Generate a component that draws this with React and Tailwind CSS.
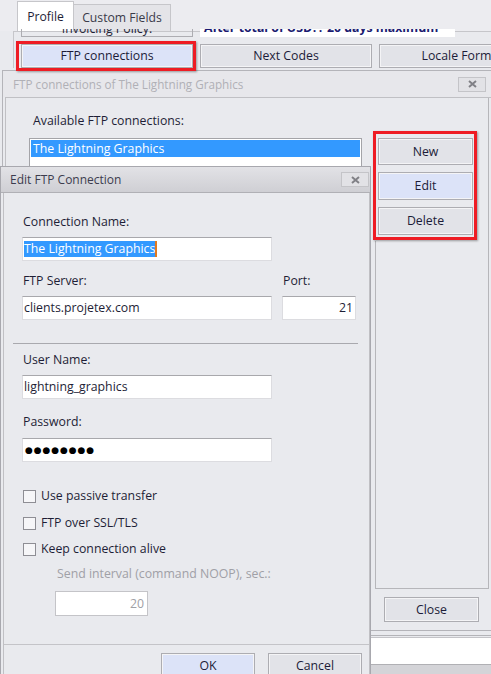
import React from "react";

const btn =
  "flex items-center justify-center border border-[#adadb2] shadow-[inset_0_0_0_1px_#f4f4f6] text-[#1c1c38]";

function CloseX() {
  return (
    <div className="flex items-center justify-center w-[28px] h-[15px] border border-[#c4c4c8] bg-[#e2e2e6]">
      <svg width="9" height="8" viewBox="0 0 9 8">
        <path d="M1 1 L8 7 M8 1 L1 7" stroke="#808086" strokeWidth="2" />
      </svg>
    </div>
  );
}

function Field({ className = "", children }) {
  return (
    <div
      className={
        "h-[24px] bg-white border border-[#dcdce0] border-t-[#a8a8ac] flex items-center px-[1px] " +
        className
      }
    >
      {children}
    </div>
  );
}

function Check({ label }) {
  return (
    <div className="flex items-center h-[16px]">
      <div className="w-[13px] h-[13px] border border-[#8e8e94] bg-[#f6f6f8] ml-[21px]" />
      <span className="ml-[5px]">{label}</span>
    </div>
  );
}

export default function App() {
  return (
    <div className="relative w-[491px] h-[674px] overflow-hidden bg-[#e9eaee] text-[12.3px] leading-[16px] text-[#1e1e36] font-['Open_Sans',sans-serif]">
      {/* main window (behind) */}
      <div className="flex flex-col h-full">
        <div className="flex items-end h-[31px] pl-[17px] bg-[#ececf0]">
          <div className="w-[57px] h-[30px] bg-white border border-[#c6c6ca] border-b-0 flex items-center justify-center text-[12.2px]">
            Profile
          </div>
          <div className="w-[97px] h-[27px] bg-[#e4e4e8] border border-[#c6c6ca] border-b-0 border-l-0 flex items-center justify-center text-[12.2px] text-[#3a3a48]">
            Custom Fields
          </div>
        </div>
        <div className="ml-[13px] border-l border-t border-[#c6c6ca] flex flex-col pl-[7px]">
          <div className="h-[8px] -mt-[3px] overflow-hidden flex gap-[7px]">
            <div className="w-[172px] h-[8px] shrink-0 border-x border-b border-[#adadb2] flex justify-center">
              <span className="block -mt-[8px]">Invoicing Policy:</span>
            </div>
            <div className="w-[255px] h-[8px] shrink-0 flex flex-col bg-white">
              <span className="block -mt-[9px] pl-[4px] font-bold text-[#1a1a70] whitespace-nowrap">
                After total of USD?? 20 days maximum
              </span>
            </div>
          </div>
          <div className="mt-[7px] flex gap-[7px]">
            <div className={btn + " w-[172px] h-[24px] bg-[#dce3f8] shrink-0"}>FTP connections</div>
            <div className={btn + " w-[172px] h-[24px] bg-[#e2e3e8] shrink-0"}>Next Codes</div>
            <div className={btn + " w-[172px] h-[24px] bg-[#e2e3e8] shrink-0"}>Locale Formats</div>
          </div>
        </div>
        <div className="flex-1" />
        <div className="border-t border-[#b4b4b8] mt-[3px] h-[1px]" />
        <div className="h-[27px] bg-white border-t border-[#c4c4c8] mt-[1px]" />
        <div className="h-[10px] bg-[#d4d4d8] border-t border-[#b0b0b4]" />
      </div>

      {/* FTP connections window */}
      <div className="absolute left-[2px] top-[70px] w-[490px] h-[561px] bg-[#e9eaee] border border-[#b4b4b9] flex flex-col">
        <div className="h-[26px] flex items-center justify-between pl-[10px] pr-[5px] bg-[#e7e7eb]">
          <span className="text-[#b0b0b6] text-[11.7px]">FTP connections of The Lightning Graphics</span>
          <CloseX />
        </div>
        <div className="flex-1 flex flex-col ml-[2px] border-t border-l border-[#c0c0c4]">
          <div className="h-[491px] flex">
            <div className="w-[369px] flex flex-col pl-[27px] pt-[15px]">
              <div>Available FTP connections:</div>
              <div className="mt-[9px] -ml-[4px] w-[333px] h-[120px] bg-white border border-[#a4a4a8] p-[1px]">
                <div className="h-[17px] bg-[#3399ff] text-white pl-[2px] flex items-center">The Lightning Graphics</div>
              </div>
            </div>
            <div className="w-[114px] flex flex-col">
              <div className="h-[143px] border-r border-[#b6b6ba] flex flex-col pl-[3px] pt-[40px] gap-[7px]">
                <div className={btn + " w-[95px] h-[27px] bg-[#e2e3e8]"}>New</div>
                <div className={btn + " w-[95px] h-[28px] bg-[#dce3f8]"}>Edit</div>
                <div className={btn + " w-[95px] h-[28px] bg-[#e2e3e8]"}>Delete</div>
              </div>
              <div className="flex-1 border-l border-r border-b border-[#b6b6ba]" />
            </div>
          </div>
          <div className="flex pl-[378px] pt-[8px]">
            <div className={btn + " w-[95px] h-[25px] bg-[#e2e3e8]"}>Close</div>
          </div>
        </div>
      </div>

      {/* Edit FTP Connection dialog */}
      <div className="absolute left-0 top-[166px] w-[371px] h-[520px] border border-[#a8a8ae] bg-[#e9eaee] flex flex-col">
        <div className="h-[26px] flex items-center justify-between pl-[9px] pr-[1px] bg-gradient-to-b from-[#e2e2e6] to-[#cfcfd4] border-b border-[#b0b0b5]">
          <span className="text-[#3c3c4e] text-[12px]">Edit FTP Connection</span>
          <CloseX />
        </div>
        <div className="flex-1 ml-[2px] border-l border-r border-[#c0c0c4] flex flex-col">
          <div className="pl-[19px] pt-[21px]">Connection Name:</div>
          <Field className="mt-[7px] ml-[18px] w-[250px]">
            <span className="bg-[#3399ff] text-white h-[16px] flex items-center border-r-2 border-[#e07a20]">
              The Lightning Graphics
            </span>
          </Field>
          <div className="flex mt-[12px]">
            <div className="flex flex-col">
              <div className="pl-[19px]">FTP Server:</div>
              <Field className="mt-[7px] ml-[18px] w-[250px]">clients.projetex.com</Field>
            </div>
            <div className="flex flex-col ml-[10px]">
              <div className="pl-[1px]">Port:</div>
              <Field className="mt-[7px] w-[74px] justify-end pr-[2px]">21</Field>
            </div>
          </div>
          <div className="mt-[23px] ml-[9px] w-[345px] h-[1px] bg-[#a9a9ae]" />
          <div className="pl-[19px] mt-[8px]">User Name:</div>
          <Field className="mt-[7px] ml-[18px] w-[250px]">lightning_graphics</Field>
          <div className="pl-[19px] mt-[15px]">Password:</div>
          <Field className="mt-[8px] ml-[18px] w-[250px]">
            <span className="font-['DejaVu_Sans',sans-serif] text-[9px] tracking-[0.9px] text-black pl-[1px]">●●●●●●●●</span>
          </Field>
          <div className="mt-[26px] flex flex-col gap-[11px] -ml-[2px]">
            <Check label="Use passive transfer" />
            <Check label="FTP over SSL/TLS" />
          </div>
          <div className="mt-[10px] -ml-[2px]">
            <Check label="Keep connection alive" />
          </div>
          <div className="mt-[9px] pl-[53px] text-[#a0a0a6]">Send interval (command NOOP), sec.:</div>
          <div className="mt-[9px] ml-[51px] w-[93px] h-[25px] bg-white border border-[#c4c4c8] flex items-center justify-end pr-[3px] text-[#a0a0a6]">
            20
          </div>
          <div className="mt-[28px] h-[1px] bg-[#c4c4c8]" />
          <div className="mt-[8px] flex gap-[13px] pl-[157px]">
            <div className={btn + " w-[94px] h-[26px] bg-[#dce3f8]"}>OK</div>
            <div className={btn + " w-[94px] h-[26px] bg-[#e2e3e8]"}>Cancel</div>
          </div>
        </div>
      </div>

      {/* red highlight frames */}
      <div className="absolute left-[16px] top-[41px] w-[180px] h-[30px] border-[3px] border-[#ee1c24] shadow-[1px_1px_2px_rgba(0,0,0,0.35)]" />
      <div className="absolute left-[373px] top-[131px] w-[104px] h-[109px] border-[3px] border-[#ee1c24] shadow-[1px_1px_2px_rgba(0,0,0,0.35)]" />
    </div>
  );
}
